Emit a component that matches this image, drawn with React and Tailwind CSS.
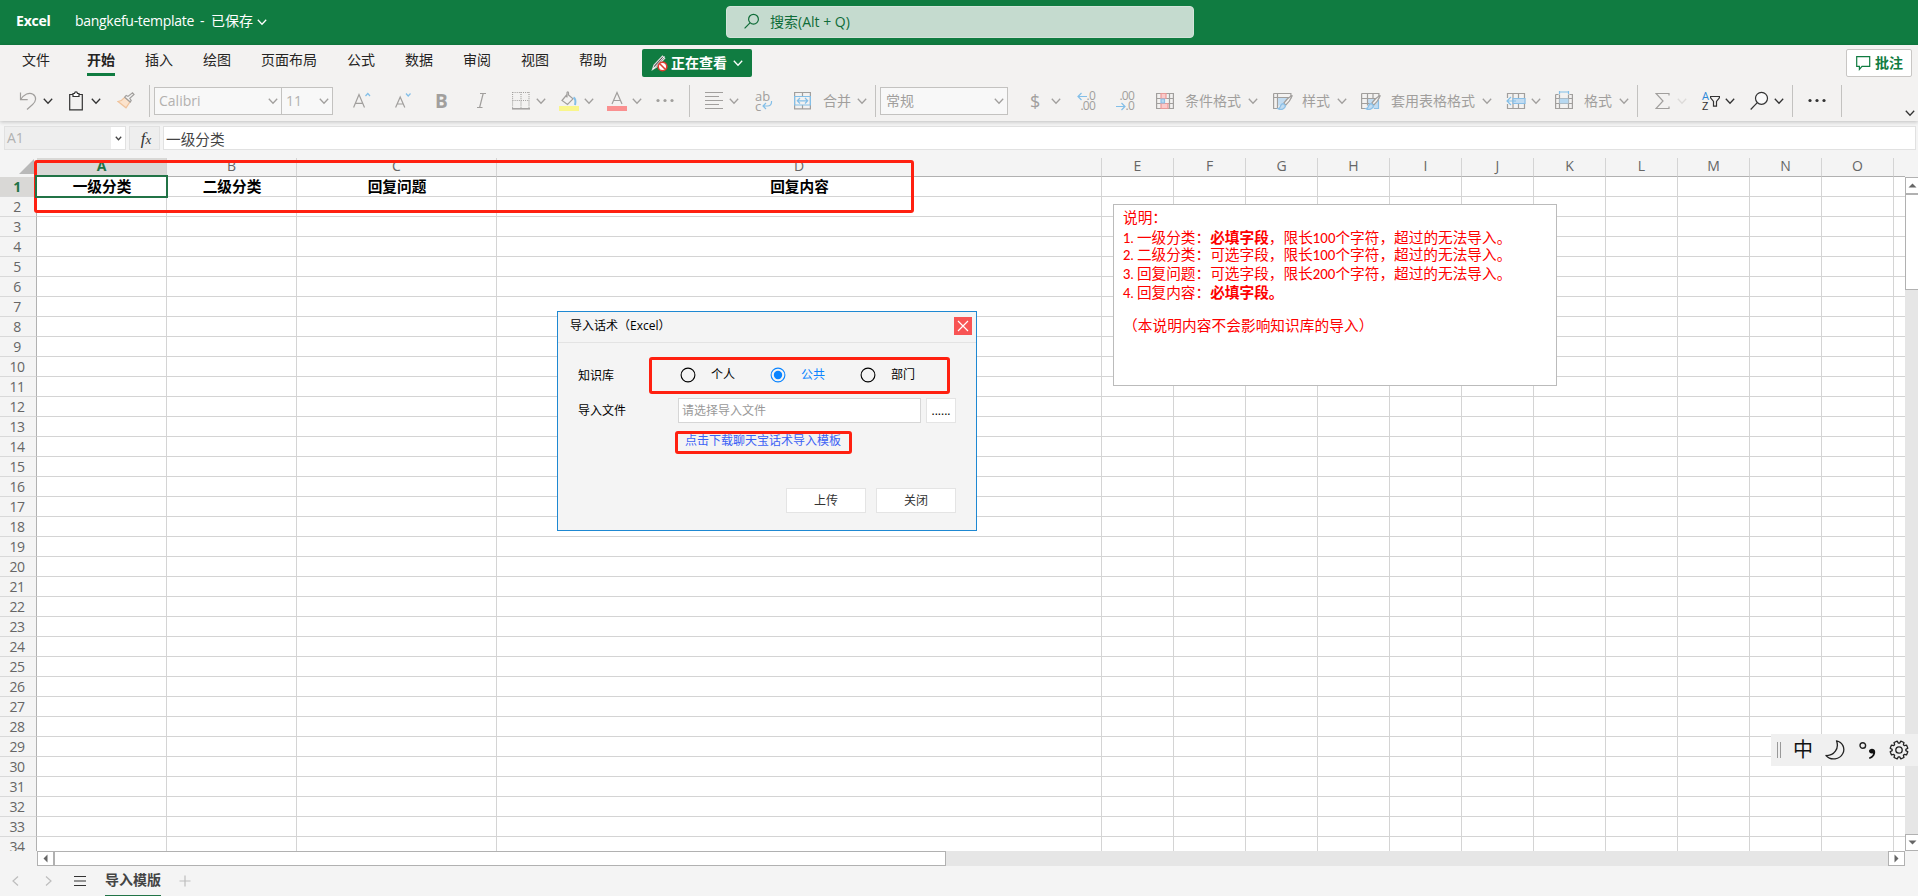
import clsx from "clsx";

const ROWS = Array.from({ length: 34 }, (_, i) => i + 1);

const COLUMNS = [
  { name: "A", width: "w-[130px]", title: "一级分类" },
  { name: "B", width: "w-[130px]", title: "二级分类" },
  { name: "C", width: "w-[200px]", title: "回复问题" },
  { name: "D", width: "w-[605px]", title: "回复内容" },
  ..."EFGHIJKLMNO".split("").map((name) => ({ name, width: "w-[72px]" })),
];

const MENU = ["插入", "绘图", "页面布局", "公式", "数据", "审阅", "视图", "帮助"];

/* ---------- icons ---------- */

function Icon({ w = 18, h = 20, className, children }) {
  return (
    <svg
      width={w}
      height={h}
      viewBox={`0 0 ${w} ${h}`}
      fill="none"
      stroke="#a19f9d"
      strokeWidth="1.2"
      className={clsx("shrink-0", className)}
    >
      {children}
    </svg>
  );
}

function Chevron({ className, stroke = "#a19f9d" }) {
  return (
    <Icon w={10} h={8} className={className}>
      <path d="M.8 1.8 5 6.2 9.2 1.8" stroke={stroke} strokeWidth="1.3" />
    </Icon>
  );
}

function Dots({ className, fill = "#a19f9d" }) {
  return (
    <Icon className={className}>
      <g fill={fill} stroke="none">
        <circle cx="2" cy="9.5" r="1.6" />
        <circle cx="9" cy="9.5" r="1.6" />
        <circle cx="16" cy="9.5" r="1.6" />
      </g>
    </Icon>
  );
}

function Divider({ className }) {
  return <div className={clsx("h-8 w-px shrink-0 bg-[#c3c2c0]", className)} />;
}

function Label({ className, children }) {
  return (
    <span className={clsx("shrink-0 text-sm whitespace-nowrap text-[#a19f9d]", className)}>
      {children}
    </span>
  );
}

function Brush() {
  return (
    <>
      <path d="M18.8 4.6c-2.6 1.6-6.3 5-8 7.6l2 1.8c2.4-2 5-5.6 6.4-9.2z" fill="#f3f2f1" />
      <path d="M10.3 12.6c-2 .1-2.6 1.4-3 2.9-.3 1.2-1 1.9-2.3 2.2 3 1.7 7 .4 7.6-3z" fill="#c2dcf1" stroke="#8bbfe6" />
    </>
  );
}

function Gear() {
  const points = [];
  for (let i = 0; i < 8; i++) {
    [
      [-0.3, 6.9],
      [-0.19, 9],
      [0.19, 9],
      [0.3, 6.9],
    ].forEach(([off, r]) => {
      const a = (i * Math.PI) / 4 + Math.PI / 8 + off;
      points.push(`${(10 + r * Math.cos(a)).toFixed(2)},${(10 + r * Math.sin(a)).toFixed(2)}`);
    });
  }
  return (
    <svg width="20" height="20" viewBox="0 0 20 20" fill="none" stroke="#222" strokeWidth="1.3">
      <polygon points={points.join(" ")} strokeLinejoin="round" />
      <circle cx="10" cy="10" r="3.2" />
    </svg>
  );
}

/* ---------- title bar and ribbon ---------- */

function TitleBar() {
  return (
    <header className="flex h-[45px] items-center bg-[#107c41] pb-[3px] pl-4 text-sm text-white">
      <span className="w-[59px] font-bold tracking-[-0.2px]">Excel</span>
      <span className="w-[125px] tracking-[-0.3px] whitespace-nowrap">bangkefu-template</span>
      <span className="w-[11px]">-</span>
      <span>已保存</span>
      <Chevron stroke="#fff" className="mt-0.5 ml-1" />
      <div className="mt-px ml-[459px] flex h-8 w-[468px] shrink-0 items-center rounded-sm border border-[#d3e4da] bg-[#c5dbcf] pl-[17px] text-[#0f6c38]">
        <Icon w={16} h={20}>
          <g stroke="#0f6c38">
            <circle cx="9.5" cy="7.2" r="4.9" />
            <path d="M6 10.8.6 16.3" />
          </g>
        </Icon>
        <span className="ml-2.5">搜索(Alt + Q)</span>
      </div>
    </header>
  );
}

function Menu() {
  return (
    <nav className="flex h-10 items-start pl-[22px] text-sm text-[#252423]">
      <span className="mr-[37px] pt-[5px]">文件</span>
      <span className="mr-[30px] h-[31px] border-b-[3px] border-[#107c41] pt-[5px] font-bold">
        开始
      </span>
      <div className="flex gap-[30px] pt-[5px]">
        {MENU.map((item) => (
          <span key={item}>{item}</span>
        ))}
      </div>
      <button className="mt-1 ml-[35px] flex h-7 w-[110px] items-center rounded-xs bg-[#107c41] pl-[9px] font-bold text-white">
        <Icon w={17} h={18}>
          <path d="M1.5 15.5 3 11 11.5 2.2l2.2 2L5.5 13z" fill="#444" stroke="#ddd" />
          <path d="M2 15 13.5 2.5" stroke="#fff" strokeWidth="1" />
          <circle cx="11.5" cy="12.5" r="4.3" fill="#fff" stroke="#e03c31" strokeWidth="1.6" />
          <path d="m8.7 9.7 5.600 5.600" stroke="#e03c31" strokeWidth="1.6" />
        </Icon>
        <span className="ml-[3px]">正在查看</span>
        <Chevron stroke="#fff" className="ml-1.5" />
      </button>
      <button className="mt-1 mr-1.5 ml-auto flex h-7 w-[66px] items-center rounded-xs border border-[#c8c6c4] bg-white pl-[9px] font-bold text-[#107c41]">
        <Icon w={15} h={16}>
          <path d="M.7 1.7h13v9.600H6l-2.600 3v-3H.7z" stroke="#107c41" />
        </Icon>
        <span className="ml-1">批注</span>
      </button>
    </nav>
  );
}

function Toolbar() {
  return (
    <div className="flex h-8 items-center pl-[19px]">
      {/* clipboard */}
      <Icon>
        <path d="M1.5 1.5v7.200h7.200M1.700 8.500C5 3.500 10 .8 14 3.200c4 2.600 3 7.400-.4 10.300L8 18.500" />
      </Icon>
      <Chevron stroke="#333" className="ml-1.5" />
      <Icon w={14} className="ml-4">
        <path d="M4 3.500H.7v15.300h12.600V3.500H10" stroke="#333" />
        <path d="M4 5.500v-3h1.500C5.700.3 8.300.3 8.500 2.500H10v3z" fill="#fff" stroke="#333" />
      </Icon>
      <Chevron stroke="#333" className="ml-2" />
      <Icon className="ml-4">
        <path d="M1 10.500 9 16.800l4-6-5.300-4.500C6 8.500 4 10 1 10.500z" fill="#fbe3cd" stroke="#f0c39b" />
        <path d="m7.700 6.200 5.500 4.800 1-1.600-1.400-2.100L17 3.500l-1.500-1.700-4.500 3.600-1.800-1z" fill="#f3f2f1" />
      </Icon>
      <Divider className="ml-3.5" />

      {/* font */}
      <div className="ml-1 flex h-7 w-[179px] shrink-0 border border-[#c3c2c0] bg-[#f8f8f8] text-sm text-[#b3b1af]">
        <div className="flex w-[127px] items-center justify-between border-r border-[#c3c2c0] pr-[3px] pl-1">
          Calibri
          <Chevron />
        </div>
        <div className="flex flex-1 items-center justify-between pr-[3px] pl-1">
          11
          <Chevron />
        </div>
      </div>
      <Icon className="ml-5">
        <path d="M.6 16.500 6 3.500l5.500 13M2.400 12.300h7.300" />
        <path d="m12.500 5 2.300-2.500L17 5" stroke="#83bfe8" />
      </Icon>
      <Icon w={16} className="ml-6">
        <path d="M.6 16.500 5.200 6l4.600 10.500M2.200 13h6.100" />
        <path d="m11 2.500 2.200 2.500 2.300-2.500" stroke="#83bfe8" />
      </Icon>
      <span className="ml-6 w-3 shrink-0 text-[19px] leading-5 font-bold text-[#a19f9d]">B</span>
      <Icon w={9} className="ml-[30px]">
        <path d="M3 2.500h6M0 16.500h5.500M6.200 2.500l-3.600 14" />
      </Icon>
      <Icon className="ml-[26px]">
        <path d="M.5 1.500h17M.5 9.500h17M.5 1v16M9 1v16M17 1v16" strokeDasharray="1 1.1" />
        <path d="M0 17.800h18" strokeWidth="1.5" />
      </Icon>
      <Chevron className="ml-1.5" />
      <Icon w={20} className="ml-[13px]">
        <path d="M8 1.500v5M8 3.500 3 9.500l5.500 4L14 7.800 9.500 4V1.800c0-1.200-1.500-1.200-1.500 0" />
        <path d="M14.500 6.500c2 1 2.500 3 1.500 7.500" stroke="#83bfe8" strokeWidth="2" />
        <path d="M0 17.500h20" stroke="#f9f68c" strokeWidth="5" />
      </Icon>
      <Chevron className="ml-[5px]" />
      <Icon w={20} className="ml-[13px]">
        <path d="m5 13 5-11.500L15 13M6.500 9.500h7" />
        <path d="M0 17.500h20" stroke="#fa9090" strokeWidth="5" />
      </Icon>
      <Chevron className="ml-[5px]" />
      <Dots className="ml-3.5" />
      <Divider className="ml-[15px]" />

      {/* alignment */}
      <Icon className="ml-[15px]">
        <path d="M0 1.500h18M0 5.500h14M0 9.500h18M0 13.500h14M0 17.500h18" />
      </Icon>
      <Chevron className="ml-1.5" />
      <div className="relative ml-4 h-5 w-[18px] shrink-0 text-[13px] leading-[10px] text-[#a19f9d]">
        <div>ab</div>
        <div>c</div>
        <Icon w={11} h={9} className="absolute top-2.5 left-[7px]">
          <path d="M9.500 0c.3 3.500-1.500 5-4 5H1m3-3L1 5l3 3" stroke="#83bfe8" />
        </Icon>
      </div>
      <Icon w={17} className="ml-[21px]">
        <path d="M.6 1.500h15.800v16.300H.6zM8.500 1.500v4m0 8.500v4" />
        <path d="M.6 5.500h15.800V14H.6zM3.500 9.800h10M6 7 3.300 9.800 6 12.500M11 7l2.700 2.800L11 12.500" stroke="#83bfe8" />
      </Icon>
      <Label className="ml-3">合并</Label>
      <Chevron className="ml-1.5" />
      <Divider className="ml-2" />

      {/* number */}
      <div className="ml-1 flex h-7 w-32 shrink-0 items-center justify-between border border-[#c3c2c0] bg-[#f8f8f8] pr-[3px] pl-[5px] text-sm text-[#a19f9d]">
        常规
        <Chevron />
      </div>
      <span className="ml-[22px] w-2.5 shrink-0 text-[18px] leading-5 text-[#a19f9d]">$</span>
      <Chevron className="ml-[11px]" />
      <div className="ml-[15px] w-[19px] shrink-0 text-[12px] leading-[10px] tracking-[-0.8px] text-[#a19f9d]">
        <div className="flex items-center justify-end">
          <Icon w={10} h={9}>
            <path d="M10 4.500H1M4.500 1 1 4.500 4.500 8" stroke="#83bfe8" />
          </Icon>
          .0
        </div>
        <div className="text-right">.00</div>
      </div>
      <div className="ml-5 w-[19px] shrink-0 text-[12px] leading-[10px] tracking-[-0.8px] text-[#a19f9d]">
        <div className="text-right">.00</div>
        <div className="flex items-center justify-end">
          <Icon w={10} h={9}>
            <path d="M0 4.500h9M5.500 1 9 4.500 5.500 8" stroke="#83bfe8" />
          </Icon>
          .0
        </div>
      </div>

      {/* styles and cells */}
      <Icon className="ml-[22px]">
        <path d="M.6 2.500h16.800v15H.6zM.6 7.500h16.800M.6 12.500h16.800M13.500 2.500v15" />
        <path d="M5 2.500h5v5H5zM5 12.500h7v5H5z" fill="#fbcaca" stroke="#e99a98" />
        <path d="M5 8h3.500v4H5z" fill="#b7d8f0" stroke="#8bbfe6" />
      </Icon>
      <Label className="ml-[11px]">条件格式</Label>
      <Chevron className="ml-[7px]" />
      <Icon w={20} className="ml-[15px]">
        <path d="M.6 2.500h17.300v5M.6 2.500v15h4M4.500 2.500v15M.6 6.500h17" />
        <path d="M5 7h10l-5 6-5 2z" fill="#c2dcf1" stroke="none" />
        <Brush />
      </Icon>
      <Label className="ml-[9px]">样式</Label>
      <Chevron className="ml-[7px]" />
      <Icon w={20} className="ml-3.5">
        <path d="M7 7.500h11v10H7z" fill="#c2dcf1" stroke="none" />
        <path d="M.6 2.500h17.300v5M.6 2.500v15h5M6.500 2.500v12M12 2.500v5M.6 7.500h17M.6 12.500h8" />
        <path d="M17.500 9v8.500H13" stroke="#8bbfe6" />
        <Brush />
      </Icon>
      <Label className="ml-2.5">套用表格格式</Label>
      <Chevron className="ml-[7px]" />
      <Icon w={20} className="ml-3.5">
        <path d="M1.500 7V2.500h17v15h-17V13M7 2.500v15M12.500 2.500v15" />
        <path d="M7 7.500h12v5H7z" fill="#c2dcf1" stroke="#8bbfe6" />
        <path d="M10 10H1M5 6l-4 4 4 4" stroke="#83bfe8" />
      </Icon>
      <Chevron className="ml-[5px]" />
      <Icon className="ml-3.5">
        <path d="M.6 3.500h2.900m11 0h2.900v14H.6v-14M4.500 3.500v14M13.500 3.500v14M.6 7.500h16.800M.6 12.500h16.800" />
        <path d="M4.500 7.500h9v5h-9z" fill="#b7d8f0" stroke="none" />
        <path d="M4.500 1h9M4.500-1v4m9-4v4" stroke="#83bfe8" />
      </Icon>
      <Label className="ml-[11px]">格式</Label>
      <Chevron className="ml-[7px]" />
      <Divider className="ml-2" />

      {/* editing */}
      <Icon w={15} className="ml-[17px]">
        <path d="M14 4.500v-2H1l7 7.500-7 7.500h13v-2" />
      </Icon>
      <Chevron stroke="#dddbd9" className="ml-[7px]" />
      <div className="ml-[15px] flex w-[18px] shrink-0 items-center">
        <div className="w-2 text-[11px] leading-[10px]">
          <div className="text-[#2b88d8]">A</div>
          <div className="text-[#333]">Z</div>
        </div>
        <Icon w={10} h={12}>
          <path d="M.6 1.500h8.800v1.300L6.500 6.500v4.700h-3V6.500L.6 2.800z" stroke="#333" />
        </Icon>
      </div>
      <Chevron stroke="#333" className="ml-[5px]" />
      <Icon w={19} className="ml-[15px]">
        <circle cx="11.5" cy="7.3" r="6" fill="#fafafa" stroke="#333" />
        <path d="M7.300 11.700.7 18.500" stroke="#333" />
      </Icon>
      <Chevron stroke="#333" className="ml-[5px]" />
      <Divider className="ml-2" />
      <Dots fill="#333" className="ml-[15px]" />
      <Divider className="ml-[15px]" />
      <Chevron stroke="#333" className="mt-6 mr-[3px] ml-auto" />
    </div>
  );
}

function FormulaBar() {
  return (
    <div className="flex h-[37px] items-start bg-[#f4f4f4] pt-[5px] pl-1">
      <div className="flex h-6 w-[122px] border border-[#e1e1e1] bg-[#eee]">
        <span className="flex-1 pl-0.5 text-sm leading-[22px] text-[#b1b1b1]">A1</span>
        <span className="flex w-3.5 items-center justify-center bg-white">
          <svg width="7" height="5" viewBox="0 0 7 5" fill="none" stroke="#444" strokeWidth="1.3">
            <path d="m.8.8 2.700 3L6.200.8" />
          </svg>
        </span>
      </div>
      <div className="ml-[3px] h-6 w-[31px] border border-[#e1e1e1] bg-[#eee] pl-[3px] text-center font-['Liberation_Serif',serif] text-[17px] leading-[23px] text-[#333] italic">
        f<span className="text-[13px]">x</span>
      </div>
      <div className="mr-0.5 ml-[3px] h-6 flex-1 border border-[#e1e1e1] bg-white pl-0.5 text-[14.67px] leading-[24px] text-[#444]">
        一级分类
      </div>
    </div>
  );
}

/* ---------- sheet ---------- */

function ColumnHeaders() {
  return (
    <div className="flex h-[19px] bg-[#f4f4f4] text-sm text-[#666]">
      <div className="flex w-[37px] justify-end pt-px pr-[3px]">
        <svg width="15" height="15" viewBox="0 0 15 15">
          <path d="M15 0v15H0z" fill="#b9b9b9" />
        </svg>
      </div>
      {COLUMNS.map(({ name, width }) => (
        <div
          key={name}
          className={clsx(
            "shrink-0 border-r border-b border-r-[#d4d4d4] border-b-[#b1b1b1] text-center leading-[15px]",
            width,
            name === "A" && "bg-[#d9d8d6] font-bold text-[#217346]"
          )}
        >
          {name}
        </div>
      ))}
      <div className="w-[11px] border-b border-[#b1b1b1]" />
    </div>
  );
}

function Sheet() {
  return (
    <div className="-mt-0.5 h-[676px] w-[1905px] overflow-hidden pt-0.5">
      {ROWS.map((row) => (
        <div key={row} className="flex h-5">
          <div
            className={clsx(
              "w-[37px] shrink-0 border-r border-b border-r-[#b1b1b1] border-b-[#d9d9d9] pr-0.5 text-center text-sm leading-5 tracking-[-0.4px]",
              row === 1 ? "bg-[#d9d8d6] font-bold text-[#217346]" : "bg-[#f4f4f4] text-[#666]"
            )}
          >
            {row}
          </div>
          {COLUMNS.map(({ name, width, title }) => (
            <div
              key={name}
              className={clsx(
                "relative shrink-0 border-r border-b border-[#d4d4d4] pl-px text-center text-[14.67px] leading-[18px] font-bold text-black",
                width
              )}
            >
              {row === 1 && title}
              {row === 1 && name === "A" && (
                <div className="absolute -inset-0.5 z-10 border-2 border-[#217346]" />
              )}
            </div>
          ))}
          <div className="flex-1 border-b border-[#d4d4d4]" />
        </div>
      ))}
    </div>
  );
}

function Arrow({ d }) {
  return (
    <svg width="9" height="9" viewBox="0 0 9 9" className="shrink-0">
      <path d={d} fill="#666" />
    </svg>
  );
}

function VerticalScroll() {
  return (
    <div className="flex h-[674px] w-[13px] flex-col overflow-hidden bg-[#e6e6e6]">
      <div className="flex h-[17px] items-center border border-r-0 border-[#b1b1b1] bg-white pl-0.5">
        <Arrow d="M4.500 2.500 8.500 6.500h-8z" />
      </div>
      <div className="h-24 border border-r-0 border-[#b1b1b1] bg-white" />
      <div className="mt-auto flex h-[17px] items-center border border-r-0 border-[#b1b1b1] bg-white pl-0.5">
        <Arrow d="M.5 2.500h8l-4 4z" />
      </div>
    </div>
  );
}

function HorizontalScroll() {
  return (
    <div className="ml-[37px] flex h-[15px] w-[1868px] bg-[#e6e6e6]">
      <div className="flex w-[17px] items-center justify-center border border-[#b1b1b1] bg-white">
        <Arrow d="M6.500.500v8l-4-4z" />
      </div>
      <div className="w-[892px] border border-[#b1b1b1] bg-white" />
      <div className="ml-auto flex w-[17px] items-center justify-center border border-[#b1b1b1] bg-white">
        <Arrow d="M2.500.500v8l4-4z" />
      </div>
    </div>
  );
}

function SheetTabs() {
  return (
    <footer className="flex h-[30px] items-center pl-3 text-sm">
      <Icon w={7} h={12}>
        <path d="M6 1.500 1 6l5 4.500" stroke="#bdbdbd" />
      </Icon>
      <Icon w={7} h={12} className="ml-[26px]">
        <path d="m1 1.500 5 4.500-5 4.500" stroke="#bdbdbd" />
      </Icon>
      <Icon w={12} h={12} className="ml-[22px]">
        <path d="M0 1.500h12M0 6h12M0 10.500h12" stroke="#333" />
      </Icon>
      <div className="ml-[19px] h-[30px] w-14 border-b border-[#217346] leading-[27px] font-bold text-[#444]">
        导入模版
      </div>
      <Icon w={12} h={12} className="ml-[18px]">
        <path d="M6 .5v11M.5 6h11" stroke="#bdbdbd" />
      </Icon>
    </footer>
  );
}

/* ---------- floating pieces ---------- */

function Num({ children }) {
  return <span className="font-['Lato',sans-serif] text-[13px] font-medium">{children}</span>;
}

function Note() {
  return (
    <div className="absolute top-[204px] left-[1113px] h-[182px] w-[444px] border border-[#bbb] bg-white pt-[3px] pl-[9px] text-[14.67px] leading-[18px] whitespace-nowrap text-[#fe0000]">
      <p className="mb-0.5">说明：</p>
      <p className="h-[17px]">
        <Num>1. </Num>一级分类：<b>必填字段</b>，限长<Num>100</Num>个字符，超过的无法导入。
      </p>
      <p>
        <Num>2. </Num>二级分类：可选字段，限长<Num>100</Num>个字符，超过的无法导入。
      </p>
      <p>
        <Num>3. </Num>回复问题：可选字段，限长<Num>200</Num>个字符，超过的无法导入。
      </p>
      <p>
        <Num>4. </Num>回复内容：<b>必填字段。</b>
      </p>
      <p className="mt-[14px] tracking-[0.08px]">（本说明内容不会影响知识库的导入）</p>
    </div>
  );
}

function Radio({ label, checked }) {
  return (
    <label
      className={clsx(
        "flex w-[90px] shrink-0 items-center",
        checked ? "text-[#0a84ff]" : "text-black"
      )}
    >
      <svg width="16" height="16" viewBox="0 0 16 16" fill="none" stroke="currentColor">
        <circle cx="8" cy="8" r="6.9" strokeWidth="1.1" />
        {checked && <circle cx="8" cy="8" r="4.2" fill="currentColor" stroke="none" />}
      </svg>
      <span className="ml-[15px]">{label}</span>
    </label>
  );
}

function ImportDialog() {
  return (
    <div className="absolute top-[311px] left-[557px] h-[220px] w-[420px] border border-[#1e88d2] bg-[#f4f4f4] text-xs text-black">
      <div className="flex h-[31px] items-center justify-between border-b border-[#e3e3e3] pr-1 pb-0.5 pl-3">
        <span>导入话术（Excel）</span>
        <button className="flex size-[18px] items-center justify-center bg-[#f85454]">
          <svg width="12" height="12" viewBox="0 0 12 12" stroke="#fff" strokeWidth="1.2">
            <path d="m1 1 10 10M11 1 1 11" />
          </svg>
        </button>
      </div>
      <div className="mt-[14px] flex h-[37px] items-center pl-5">
        <span className="w-[71px]">知识库</span>
        <div className="flex h-[37px] w-[301px] items-center rounded-[3px] border-[3px] border-[#ff2010] pb-px pl-7">
          <Radio label="个人" />
          <Radio label="公共" checked />
          <Radio label="部门" />
        </div>
      </div>
      <div className="mt-1 flex h-[25px] items-center pl-5">
        <span className="w-[100px]">导入文件</span>
        <div className="h-[25px] w-[243px] border border-[#d6d6d6] bg-white pl-[3px] leading-[24px] text-[#999]">
          请选择导入文件
        </div>
        <button className="ml-[5px] h-[25px] w-[30px] border border-[#e4e4e4] bg-white">
          ......
        </button>
      </div>
      <div className="mt-2 ml-[117px] h-[23px] w-[177px] rounded-[3px] border-[3px] border-[#ff2010] pl-[7px] leading-[13px] whitespace-nowrap text-[#3c62f5]">
        点击下载聊天宝话术导入模板
      </div>
      <div className="mt-[34px] flex justify-end gap-2.5 pr-5 text-[#333]">
        <button className="h-[25px] w-20 border border-[#e4e4e4] bg-white">上传</button>
        <button className="h-[25px] w-20 border border-[#e4e4e4] bg-white">关闭</button>
      </div>
    </div>
  );
}

function InputMethodBar() {
  return (
    <div className="absolute top-[734px] left-[1771px] flex h-8 w-[147px] items-center bg-[#f0f0f0] pl-1.5">
      <div className="h-4 w-1 border-x border-[#999]" />
      <span className="ml-3 w-5 text-center text-[20px] leading-8 text-[#111]">中</span>
      <svg width="20" height="20" viewBox="0 0 20 20" fill="none" stroke="#222" strokeWidth="1.3" className="ml-3">
        <path d="M11.500.8c6 1.200 9 7.400 6.300 12.700-3 6-12 7.500-16.800 2C9 16 14.500 8.500 11.500.8z" strokeLinejoin="round" />
      </svg>
      <svg width="17" height="20" viewBox="0 0 17 20" fill="none" stroke="#222" strokeWidth="1.4" className="ml-3.5">
        <circle cx="3.8" cy="5.5" r="2.8" />
        <path d="M10 17.500c3-1 4-2.500 4-4.200-2 .8-4-.3-4-2.200 0-3 6.200-3.600 6.200 1 0 3.300-2.200 6-5.700 7z" fill="#111" stroke="none" />
      </svg>
      <div className="ml-[13px]">
        <Gear />
      </div>
    </div>
  );
}

export default function App() {
  return (
    <div className="relative h-[896px] w-[1918px] overflow-hidden bg-[#f4f4f4] font-['Open_Sans','Noto_Sans_CJK_SC',sans-serif]">
      <TitleBar />
      <div className="relative h-[76px] bg-[#f3f2f1] shadow-[0_1px_4px_rgba(0,0,0,0.22)]">
        <Menu />
        <Toolbar />
      </div>
      <FormulaBar />
      <ColumnHeaders />
      <div className="flex bg-white">
        <Sheet />
        <VerticalScroll />
      </div>
      <HorizontalScroll />
      <SheetTabs />

      <div className="absolute top-[160px] left-[34px] h-[53px] w-[880px] rounded-[3px] border-[3px] border-[#ff2010]" />
      <Note />
      <ImportDialog />
      <InputMethodBar />
    </div>
  );
}
